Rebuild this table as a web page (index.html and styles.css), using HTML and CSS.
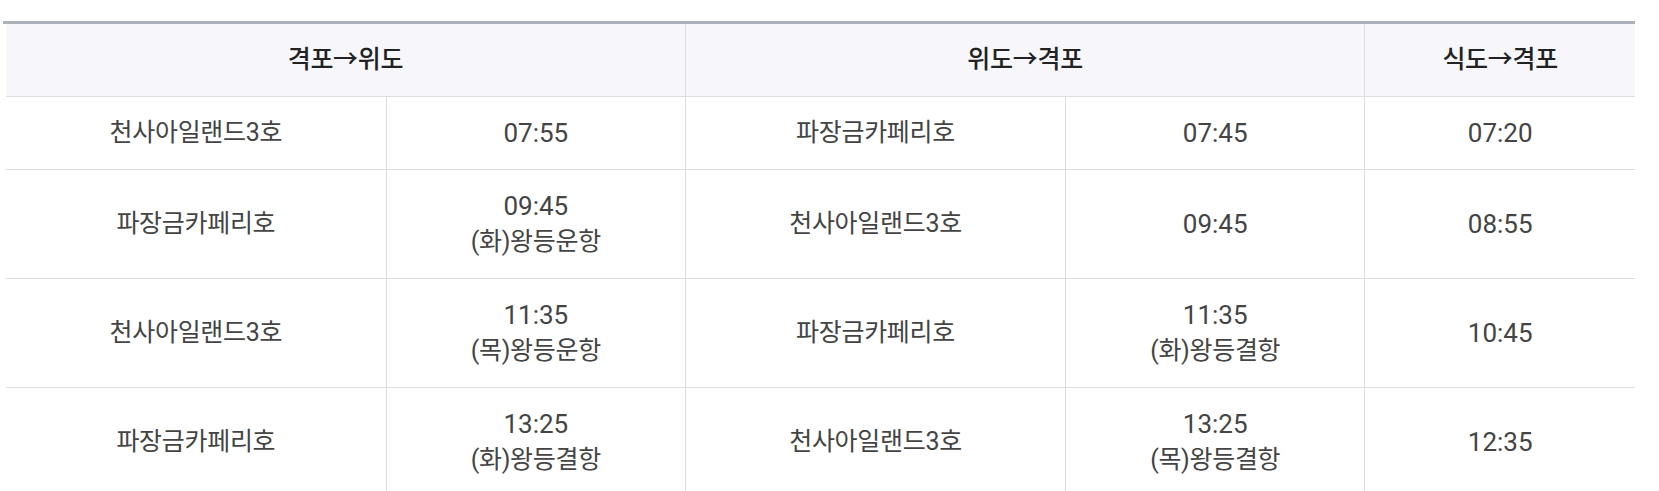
FILE: index.html
```html
<!DOCTYPE html>
<html lang="ko">
<head>
<meta charset="utf-8">
<title>운항시간표</title>
<link rel="stylesheet" href="styles.css">
</head>
<body>
<div class="schedule">
  <table class="tbl">
    <colgroup>
      <col class="c-ship">
      <col class="c-time">
      <col class="c-ship">
      <col class="c-time">
      <col class="c-last">
    </colgroup>
    <thead>
      <tr>
        <th colspan="2">격포→위도</th>
        <th colspan="2">위도→격포</th>
        <th>식도→격포</th>
      </tr>
    </thead>
    <tbody>
      <tr>
        <td>천사아일랜드3호</td>
        <td><span class="t">07:55</span></td>
        <td>파장금카페리호</td>
        <td><span class="t">07:45</span></td>
        <td><span class="t">07:20</span></td>
      </tr>
      <tr>
        <td>파장금카페리호</td>
        <td><span class="t">09:45</span>(화)왕등운항</td>
        <td>천사아일랜드3호</td>
        <td><span class="t">09:45</span></td>
        <td><span class="t">08:55</span></td>
      </tr>
      <tr>
        <td>천사아일랜드3호</td>
        <td><span class="t">11:35</span>(목)왕등운항</td>
        <td>파장금카페리호</td>
        <td><span class="t">11:35</span>(화)왕등결항</td>
        <td><span class="t">10:45</span></td>
      </tr>
      <tr>
        <td>파장금카페리호</td>
        <td><span class="t">13:25</span>(화)왕등결항</td>
        <td>천사아일랜드3호</td>
        <td><span class="t">13:25</span>(목)왕등결항</td>
        <td><span class="t">12:35</span></td>
      </tr>
    </tbody>
  </table>
</div>
</body>
</html>
```

FILE: styles.css
```css
html, body {
  margin: 0;
  padding: 0;
  background: #ffffff;
}

body {
  font-family: Roboto, "Noto Sans CJK KR", sans-serif;
  color: #444444;
}

.schedule {
  margin: 21px 24px 0 3px;
  border-top: 3px solid #abb2b9;
}

.tbl {
  margin-left: 3px;
  width: 1629px;
  border-collapse: collapse;
  table-layout: fixed;
}

.c-ship { width: 380px; }
.c-time { width: 299px; }
.c-last { width: 270px; }

.tbl th,
.tbl td {
  padding: 18px 8px;
  border: 1px solid #dddddd;
  text-align: center;
  vertical-align: middle;
  font-size: 25px;
  line-height: 36px;
  letter-spacing: -0.3px;
}

.tbl th {
  border-top: none;
  background: #f7f7fb;
  color: #222222;
  font-weight: 500;
  letter-spacing: -0.3px;
}

.tbl tr > :first-child { border-left: none; }
.tbl tr > :last-child { border-right: none; }

.tbl td {
  color: #444444;
  font-weight: 400;
}

.t {
  display: block;
  font-family: Roboto, sans-serif;
  font-size: 26px;
  line-height: 36px;
  letter-spacing: 0;
}
```
